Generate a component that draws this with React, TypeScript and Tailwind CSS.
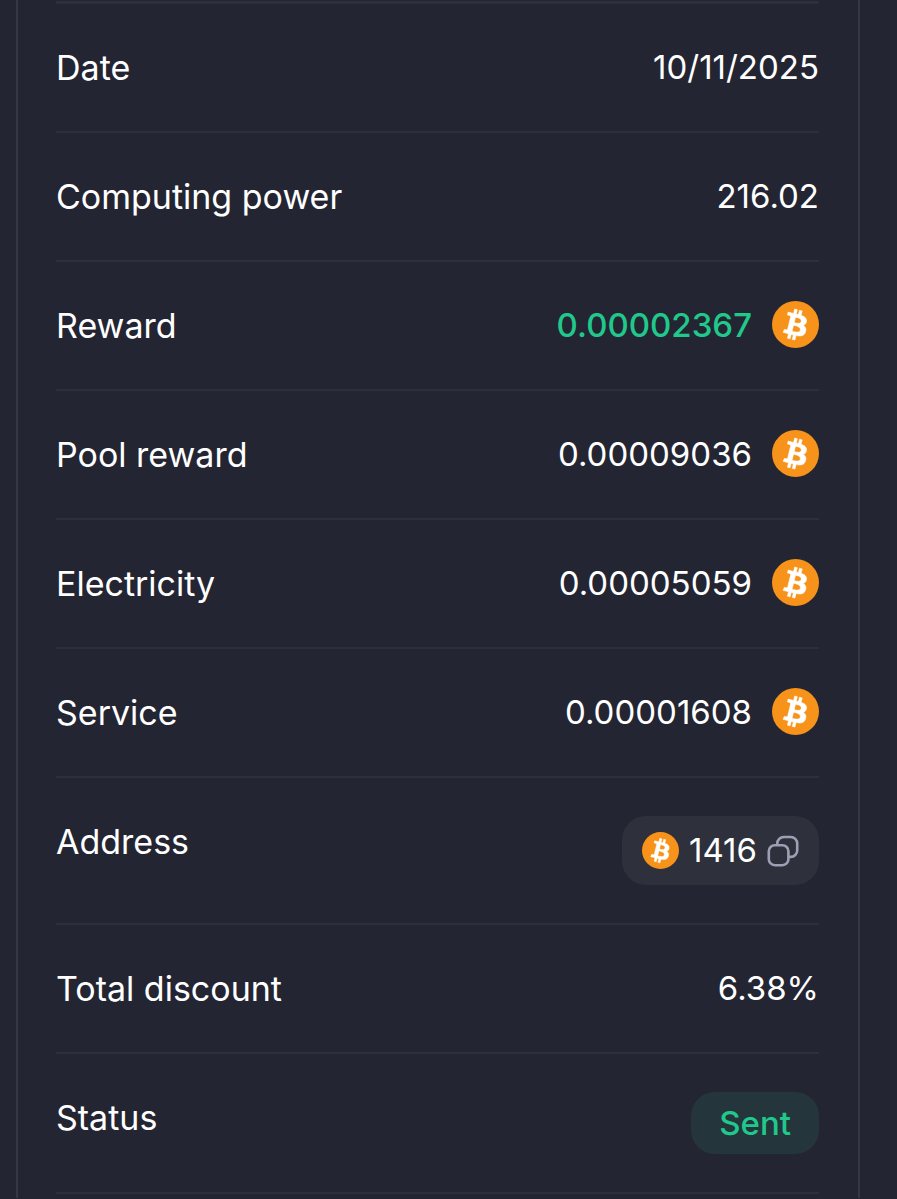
import { ReactNode } from "react";

const BitcoinIcon = ({ className }: { className: string }) => (
  <svg viewBox="0 0 32 32" className={className} aria-hidden="true">
    <circle cx="16" cy="16" r="16" fill="#f7931a" />
    <path
      transform="translate(-1.1 -0.9) scale(1.06)"
      fill="#fff"
      stroke="#fff"
      strokeWidth="0.35"
      d="M23.189 14.02c.314-2.096-1.283-3.223-3.465-3.975l.708-2.84-1.728-.43-.69 2.765c-.454-.114-.92-.22-1.385-.326l.695-2.783L15.596 6l-.708 2.839c-.376-.086-.746-.17-1.104-.26l.002-.009-2.384-.595-.46 1.846s1.283.294 1.256.312c.7.175.826.638.805 1.006l-.806 3.235c.048.012.11.03.18.057l-.183-.045-1.13 4.532c-.086.212-.303.531-.793.41.018.025-1.256-.313-1.256-.313l-.858 1.978 2.25.561c.418.105.828.215 1.231.318l-.715 2.872 1.727.43.708-2.84c.472.127.93.245 1.378.357l-.706 2.828 1.728.43.715-2.866c2.948.558 5.164.333 6.097-2.333.752-2.146-.037-3.385-1.588-4.192 1.13-.26 1.98-1.003 2.207-2.538zm-3.95 5.538c-.533 2.147-4.148.986-5.32.695l.95-3.805c1.172.293 4.929.872 4.37 3.11zm.535-5.569c-.487 1.953-3.495.96-4.47.717l.86-3.45c.975.243 4.118.696 3.61 2.733z"
    />
  </svg>
);

const CopyIcon = () => (
  <svg viewBox="0 0 32 32" fill="none" stroke="#a09eb4" strokeWidth="2.6" className="size-8" aria-hidden="true">
    <rect x="1.8" y="10.2" width="19.6" height="20" rx="6" />
    <path d="M10.3 9.8V8.5a6.500 6.500 0 0 1 6.500-6.500h6.900a6.500 6.500 0 0 1 6.500 6.500v6.900a6.500 6.500 0 0 1-6.500 6.500h-1.800" />
  </svg>
);

interface RowProps {
  label: string;
  children: ReactNode;
}

const Row = ({ label, children }: RowProps) => (
  <div className="flex items-start justify-between border-b-2 border-[#2e2f3b] py-[38px]">
    <dt className="text-[34px] leading-[51px]">{label}</dt>
    <dd className="text-[33px] leading-[51px]">{children}</dd>
  </div>
);

interface AmountProps {
  value: string;
  highlight?: boolean;
}

const Amount = ({ value, highlight }: AmountProps) => (
  <span className="flex items-start gap-5">
    <span className={highlight ? "font-medium text-[#20c98b]" : ""}>{value}</span>
    <BitcoinIcon className="mt-px size-[47px]" />
  </span>
);

export default function App() {
  return (
    <main className="min-h-screen bg-[#242532] pr-[37px] pl-4 font-['Inter',sans-serif] text-white">
      <section className="border-x-2 border-[#363743] pt-px pr-[39px] pb-1 pl-[38px]">
        <dl className="border-t-3 border-[#2e2f3b]">
          <Row label="Date">10/11/2025</Row>
          <Row label="Computing power">216.02</Row>
          <Row label="Reward">
            <Amount value="0.00002367" highlight />
          </Row>
          <Row label="Pool reward">
            <Amount value="0.00009036" />
          </Row>
          <Row label="Electricity">
            <Amount value="0.00005059" />
          </Row>
          <Row label="Service">
            <Amount value="0.00001608" />
          </Row>
          <Row label="Address">
            <span className="flex h-[69px] items-center rounded-3xl bg-[#2e303c] px-5">
              <BitcoinIcon className="mr-2.5 size-[37px]" />
              1416
              <button type="button" aria-label="Copy address" className="ml-2.5">
                <CopyIcon />
              </button>
            </span>
          </Row>
          <Row label="Total discount">6.38%</Row>
          <Row label="Status">
            <span className="flex h-[62px] items-center rounded-3xl bg-[#24363c] px-7 font-medium text-[#20c98b]">
              Sent
            </span>
          </Row>
        </dl>
      </section>
    </main>
  );
}
